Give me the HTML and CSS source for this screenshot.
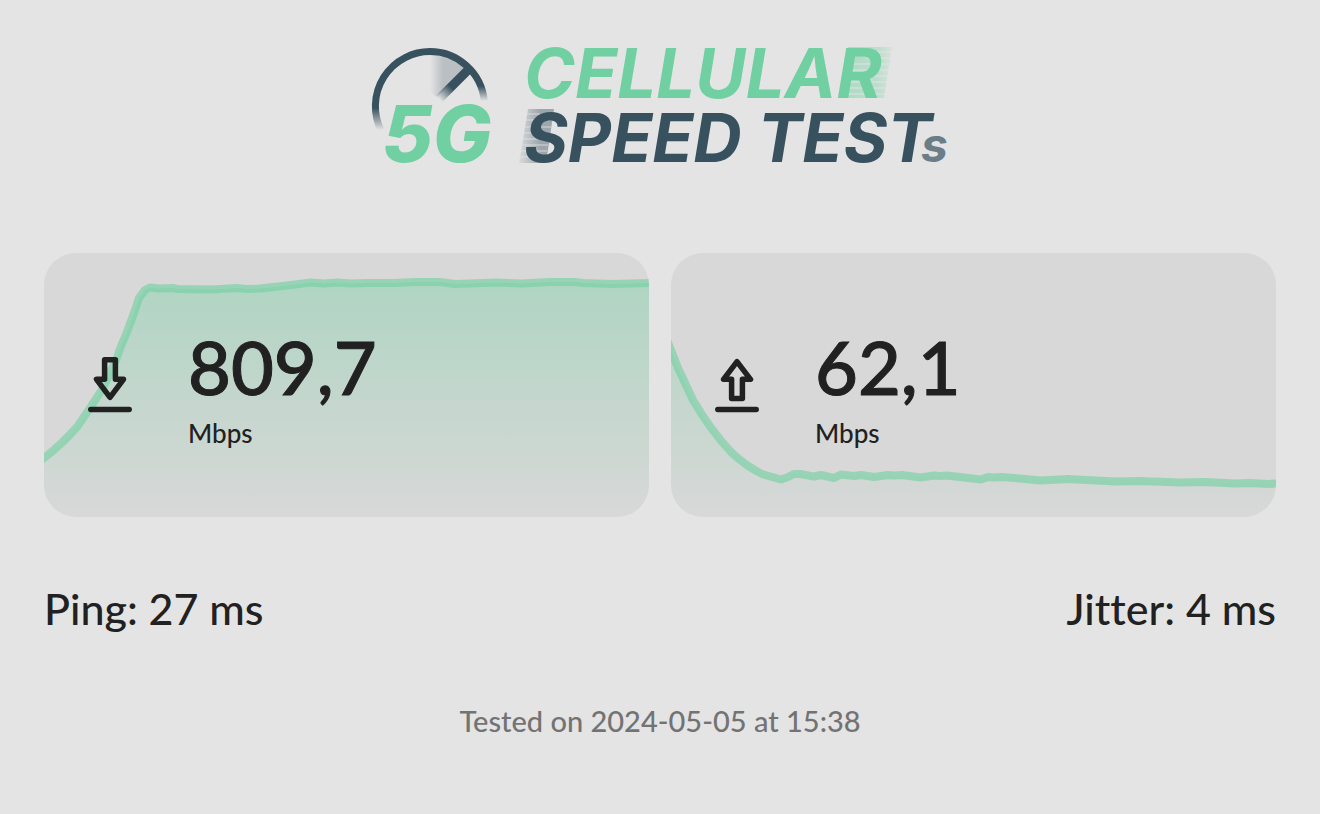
FILE: index.html
```html
<!DOCTYPE html>
<html lang="en">
<head>
<meta charset="utf-8">
<meta name="viewport" content="width=device-width, initial-scale=1">
<title>5G Cellular Speed Tests</title>
<link rel="stylesheet" href="styles.css">
</head>
<body>
<main class="page">
  <header class="header">
    <svg class="logo" viewBox="0 0 576 120" role="img" aria-label="5G Cellular Speed Tests">
      <defs>
        <linearGradient id="arcLeft" gradientUnits="userSpaceOnUse" x1="0" y1="64" x2="0" y2="86">
          <stop offset="0" stop-color="#38515f"/><stop offset="1" stop-color="#38515f" stop-opacity="0"/>
        </linearGradient>
        <linearGradient id="arcRight" gradientUnits="userSpaceOnUse" x1="0" y1="42" x2="0" y2="57">
          <stop offset="0" stop-color="#38515f"/><stop offset="1" stop-color="#38515f" stop-opacity="0"/>
        </linearGradient>
        <linearGradient id="needle" gradientUnits="userSpaceOnUse" x1="79" y1="43" x2="67" y2="55">
          <stop offset="0" stop-color="#38515f"/><stop offset="1" stop-color="#38515f" stop-opacity="0"/>
        </linearGradient>
        <linearGradient id="sweep" gradientUnits="userSpaceOnUse" x1="58" y1="0" x2="71" y2="0">
          <stop offset="0" stop-color="#38515f" stop-opacity="0"/><stop offset="1" stop-color="#38515f" stop-opacity=".25"/>
        </linearGradient>
        <linearGradient id="trailGreen" gradientUnits="userSpaceOnUse" x1="470" y1="0" x2="521" y2="0">
          <stop offset="0" stop-color="#71d0a2" stop-opacity=".5"/><stop offset=".7" stop-color="#71d0a2" stop-opacity=".34"/><stop offset="1" stop-color="#71d0a2" stop-opacity=".1"/>
        </linearGradient>
        <linearGradient id="trailDark" gradientUnits="userSpaceOnUse" x1="146" y1="0" x2="168" y2="0">
          <stop offset="0" stop-color="#38515f" stop-opacity=".05"/><stop offset="1" stop-color="#38515f" stop-opacity=".42"/>
        </linearGradient>
      </defs>
      <path d="M58 11.500A51 51 0 0 1 93 25L65 53Q58 50 58 42Z" fill="url(#sweep)"/>
      <path d="M8.800 86A54.700 54.700 0 0 1 58 7.600" fill="none" stroke="url(#arcLeft)" stroke-width="7"/>
      <path d="M57.500 7.600A54.700 54.700 0 0 1 112.300 57" fill="none" stroke="url(#arcRight)" stroke-width="7"/>
      <path d="M97 25L67 55" stroke="url(#needle)" stroke-width="9"/>
      <path d="M476 3H520L512 54H469Z" fill="url(#trailGreen)"/>
      <path d="M496 8H520M495 14H519M479 20H518M478 26H517M477 32H516M476 38H515M475 44H514M474 50H513" stroke="#e4e4e4" stroke-opacity=".45" stroke-width="2"/>
      <path d="M156 65H182L174 119H147Z" fill="url(#trailDark)"/>
      <path d="M154 70H168M153 76H180M152 83H179M151 89H172M150 95H170M149 101H176M148 107H175M147 113H162" stroke="#e4e4e4" stroke-opacity=".4" stroke-width="2"/>
      <g class="wordmark">
        <text class="mark" x="10" y="118">5G</text>
        <text class="word" x="152" y="54">CELLULAR</text>
        <text class="word dark" x="152" y="118">SPEED TEST</text>
        <text class="suffix" x="549" y="118">s</text>
      </g>
    </svg>
  </header>

  <section class="cards">
    <article class="card">
      <svg class="chart" viewBox="0 0 605 264" preserveAspectRatio="none" aria-hidden="true">
        <defs>
          <linearGradient id="area" gradientUnits="userSpaceOnUse" x1="0" y1="0" x2="0" y2="264">
            <stop offset="0" stop-color="#71d0a2" stop-opacity=".44"/><stop offset="1" stop-color="#71d0a2" stop-opacity="0"/>
          </linearGradient>
        </defs>
        <path fill="url(#area)" d="M0 205Q17 192 33 174L46 155L59 135L72 107L77 93L83 79L90 60L95 45L101 37L106 34.500L115 35.500L129 35L134 36L168 36.500L193 35L203 36L216 35.500L243 32.500L267 29.500L280 30.500L293 29.500L307 30.500L323 30H350L371 29H396L411 31L453 29.500L478 30.500L506 29H531L539 30L569 31L605 30V264H0Z"/>
        <path class="line" d="M-5 209L0 205Q17 192 33 174L46 155L59 135L72 107L77 93L83 79L90 60L95 45L101 37L106 34.500L115 35.500L129 35L134 36L168 36.500L193 35L203 36L216 35.500L243 32.500L267 29.500L280 30.500L293 29.500L307 30.500L323 30H350L371 29H396L411 31L453 29.500L478 30.500L506 29H531L539 30L569 31L605 30H610"/>
      </svg>
      <div class="reading">
        <svg class="icon" viewBox="0 0 44 56" role="img" aria-label="Download">
          <path d="M16.600 2.800H27.400V22.300H35.500L22 40.300L8.500 22.300H16.600ZM2.800 52.600H41.200"/>
        </svg>
        <div>
          <div class="value">809,7</div>
          <div class="unit">Mbps</div>
        </div>
      </div>
    </article>
    <article class="card">
      <svg class="chart" viewBox="0 0 605 264" preserveAspectRatio="none" aria-hidden="true">
        <path fill="url(#area)" d="M0 97L7 115L22 147Q40 178 61 200Q75 213 91 221L110 226.500L117 224L123 221H129L143 223.500L150 222L163 225L170 221.500L183 223L190 222L203 224L217 222L223 222.500L231 222L250 224.500L263 222.500L270 223L276 222.500L310 226.500L317 224L323 224.500L330 224L349 225.500L369 227.500L397 226L444 228.500L469 228L509 229.500L534 229L564 230.500L579 230L597 231L605 230.500V264H0Z"/>
        <path class="line" d="M-4 87L0 97L7 115L22 147Q40 178 61 200Q75 213 91 221L110 226.500L117 224L123 221H129L143 223.500L150 222L163 225L170 221.500L183 223L190 222L203 224L217 222L223 222.500L231 222L250 224.500L263 222.500L270 223L276 222.500L310 226.500L317 224L323 224.500L330 224L349 225.500L369 227.500L397 226L444 228.500L469 228L509 229.500L534 229L564 230.500L579 230L597 231L605 230.500H610"/>
      </svg>
      <div class="reading">
        <svg class="icon" viewBox="0 0 44 56" role="img" aria-label="Upload">
          <path d="M22 4.700L35.500 22.300H27.400V41.600H16.600V22.300H8.500ZM2.800 52.600H41.200"/>
        </svg>
        <div>
          <div class="value">62,1</div>
          <div class="unit">Mbps</div>
        </div>
      </div>
    </article>
  </section>

  <section class="latency">
    <div>Ping: 27 ms</div>
    <div>Jitter: 4 ms</div>
  </section>

  <footer class="tested">Tested on 2024-05-05 at 15:38</footer>
</main>
</body>
</html>
```
FILE: styles.css
```css
* {
  box-sizing: border-box;
}

body {
  margin: 0;
  background: #e4e4e4;
  color: #212121;
  font-family: Lato, "Liberation Sans", sans-serif;
  font-weight: 500;
  font-variant-ligatures: none;
}

.page {
  padding: 44px;
}

.header {
  display: flex;
  justify-content: center;
}

.logo {
  width: 576px;
  max-width: 100%;
  overflow: visible;
}

.wordmark {
  font-family: Inter, Lato, sans-serif;
  font-weight: 700;
  font-style: italic;
  fill: #71d0a2;
}

.mark {
  font-size: 78px;
  font-weight: 800;
}

.word {
  font-size: 69px;
}

.dark {
  font-size: 67px;
  fill: #38515f;
}

.suffix {
  font-size: 48px;
  fill: #6b7e88;
}

.cards {
  display: grid;
  grid-template-columns: 1fr 1fr;
  gap: 22px;
  margin-top: 89px;
}

.card {
  position: relative;
  overflow: hidden;
  min-height: 264px;
  padding: 66px 44px;
  border-radius: 32px;
  background: #d8d8d8;
}

.chart {
  position: absolute;
  inset: 0;
  width: 100%;
  height: 100%;
}

.line {
  fill: none;
  stroke: #71d0a2;
  stroke-opacity: .62;
  stroke-width: 8px;
  stroke-linejoin: round;
}

.reading {
  position: relative;
  display: flex;
  align-items: center;
  gap: 56px;
}

.icon {
  flex: none;
  width: 44px;
  height: 56px;
  fill: none;
  stroke: #212121;
  stroke-width: 5.5px;
  stroke-linecap: round;
  stroke-linejoin: round;
}

.value {
  font-size: 74px;
  line-height: 96px;
  -webkit-text-stroke: 1px;
}

.unit {
  font-size: 26px;
  line-height: 36px;
}

.latency {
  display: flex;
  justify-content: space-between;
  margin-top: 64px;
  font-size: 43px;
  line-height: 56px;
}

.tested {
  margin-top: 64px;
  color: #737373;
  font-size: 29px;
  line-height: 40px;
  text-align: center;
}
```
